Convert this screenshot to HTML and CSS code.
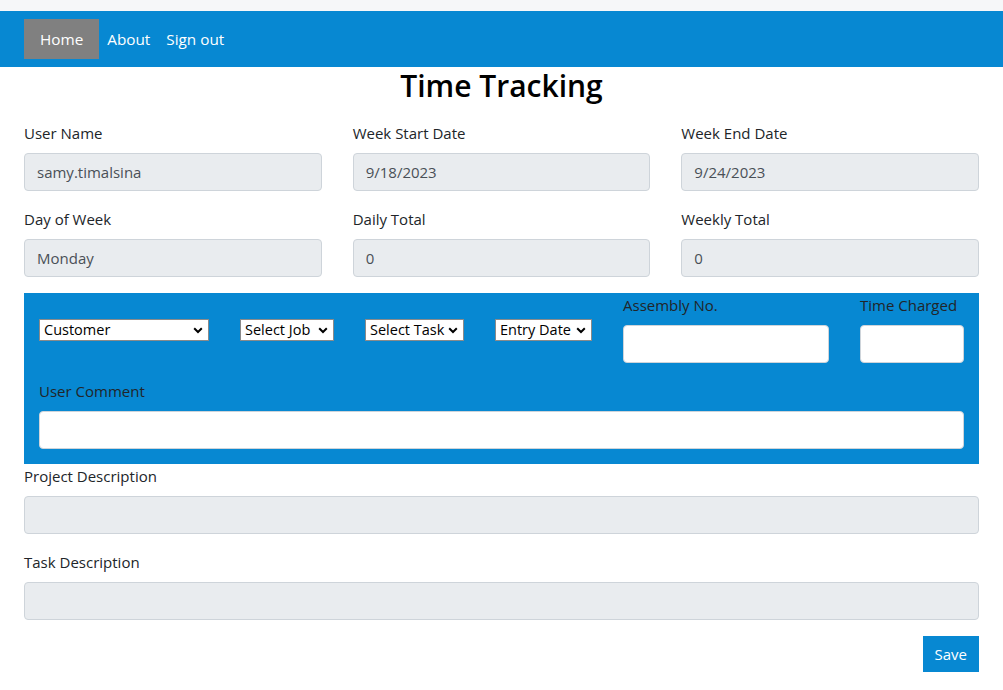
FILE: index.html
```html
<!DOCTYPE html>
<html lang="en">
<head>
<meta charset="utf-8">
<title>Time Tracking</title>
<link rel="stylesheet" href="styles.css">
</head>
<body>
<div class="topstrip"></div>
<nav class="navbar">
  <a class="nav-link active" href="#">Home</a>
  <a class="nav-link" href="#">About</a>
  <a class="nav-link" href="#">Sign out</a>
</nav>
<main class="container">
  <h1 class="title">Time Tracking</h1>
  <div class="grid3">
    <div class="form-group">
      <label class="label">User Name</label>
      <input class="form-control" type="text" value="samy.timalsina" disabled>
    </div>
    <div class="form-group">
      <label class="label">Week Start Date</label>
      <input class="form-control" type="text" value="9/18/2023" disabled>
    </div>
    <div class="form-group">
      <label class="label">Week End Date</label>
      <input class="form-control" type="text" value="9/24/2023" disabled>
    </div>
    <div class="form-group">
      <label class="label">Day of Week</label>
      <input class="form-control" type="text" value="Monday" disabled>
    </div>
    <div class="form-group">
      <label class="label">Daily Total</label>
      <input class="form-control" type="text" value="0" disabled>
    </div>
    <div class="form-group">
      <label class="label">Weekly Total</label>
      <input class="form-control" type="text" value="0" disabled>
    </div>
  </div>

  <section class="entry-panel">
    <div class="entry-row">
      <select class="sel sel-customer"><option>Customer</option></select>
      <select class="sel sel-job"><option>Select Job</option></select>
      <select class="sel sel-task"><option>Select Task</option></select>
      <select class="sel sel-date"><option>Entry Date</option></select>
      <div class="row-group grp-assembly">
        <label class="label">Assembly No.</label>
        <input class="form-control white" type="text">
      </div>
      <div class="row-group grp-time">
        <label class="label">Time Charged</label>
        <input class="form-control white" type="text">
      </div>
    </div>
    <div class="comment-group">
      <label class="label">User Comment</label>
      <input class="form-control white" type="text">
    </div>
  </section>

  <div class="form-group">
    <label class="label">Project Description</label>
    <input class="form-control" type="text" disabled>
  </div>
  <div class="form-group">
    <label class="label">Task Description</label>
    <input class="form-control" type="text" disabled>
  </div>
  <div class="actions">
    <button class="btn-save" type="button">Save</button>
  </div>
</main>
</body>
</html>
```

FILE: styles.css
```css
* { box-sizing: border-box; }

body {
  margin: 0;
  font-family: "Open Sans", "Noto Sans", sans-serif;
  font-size: 15px;
  line-height: 24px;
  color: #212529;
  background: #ffffff;
}

.topstrip {
  height: 11px;
  background: #f6f7f9;
}

.navbar {
  height: 56px;
  background: #0788d2;
  display: flex;
  align-items: center;
  padding: 0 24px;
}

.nav-link {
  color: #ffffff;
  text-decoration: none;
  padding: 8px 8px;
  line-height: 24px;
  font-size: 15.3px;
}

.nav-link.active {
  background: #808080;
  padding: 8px 16px;
}

.container {
  padding: 0 24px;
}

.title {
  margin: 0 0 16px;
  text-align: center;
  font-size: 30px;
  line-height: 38px;
  font-weight: 600;
  color: #000000;
}

.grid3 {
  display: grid;
  grid-template-columns: repeat(3, 1fr);
  column-gap: 31px;
}

.form-group {
  margin-bottom: 16px;
}

.label {
  display: block;
  margin-bottom: 8px;
  line-height: 24px;
}

.form-control {
  display: block;
  width: 100%;
  height: 38px;
  padding: 0 12px;
  font-family: inherit;
  font-size: 15px;
  color: #495057;
  background: #e9ecef;
  border: 1px solid #ced4da;
  border-radius: 4px;
  opacity: 1;
}

.form-control.white {
  background: #ffffff;
}

.entry-panel {
  background: #0788d2;
  padding: 0 15px 15px;
}

.entry-row {
  display: flex;
  align-items: center;
  column-gap: 31px;
  margin-bottom: 16px;
}

.sel {
  appearance: none;
  -webkit-appearance: none;
  height: 22px;
  margin-top: 4px;
  padding: 0 16px 0 4px;
  font-family: inherit;
  font-size: 14.5px;
  line-height: 20px;
  color: #000000;
  background-color: #ffffff;
  background-image: url("data:image/svg+xml,%3Csvg xmlns='http://www.w3.org/2000/svg' width='10' height='7' viewBox='0 0 10 7'%3E%3Cpath d='M1.2 1.3 L5 5 L8.8 1.3' fill='none' stroke='%23000' stroke-width='2'/%3E%3C/svg%3E");
  background-repeat: no-repeat;
  background-position: right 5px center;
  border: 1px solid #8a8a8a;
  border-radius: 0;
}

.sel-customer { width: 170px; }
.sel-job { width: 94px; }
.sel-task { width: 99px; }
.sel-date { width: 97px; }

.grp-assembly { width: 206px; }
.grp-time { width: 104px; }

.actions {
  display: flex;
  justify-content: flex-end;
}

.btn-save {
  font-family: inherit;
  font-size: 15px;
  line-height: 24px;
  padding: 6px 12px;
  color: #ffffff;
  background: #0788d2;
  border: none;
  border-radius: 0;
  height: 36px;
}
```
